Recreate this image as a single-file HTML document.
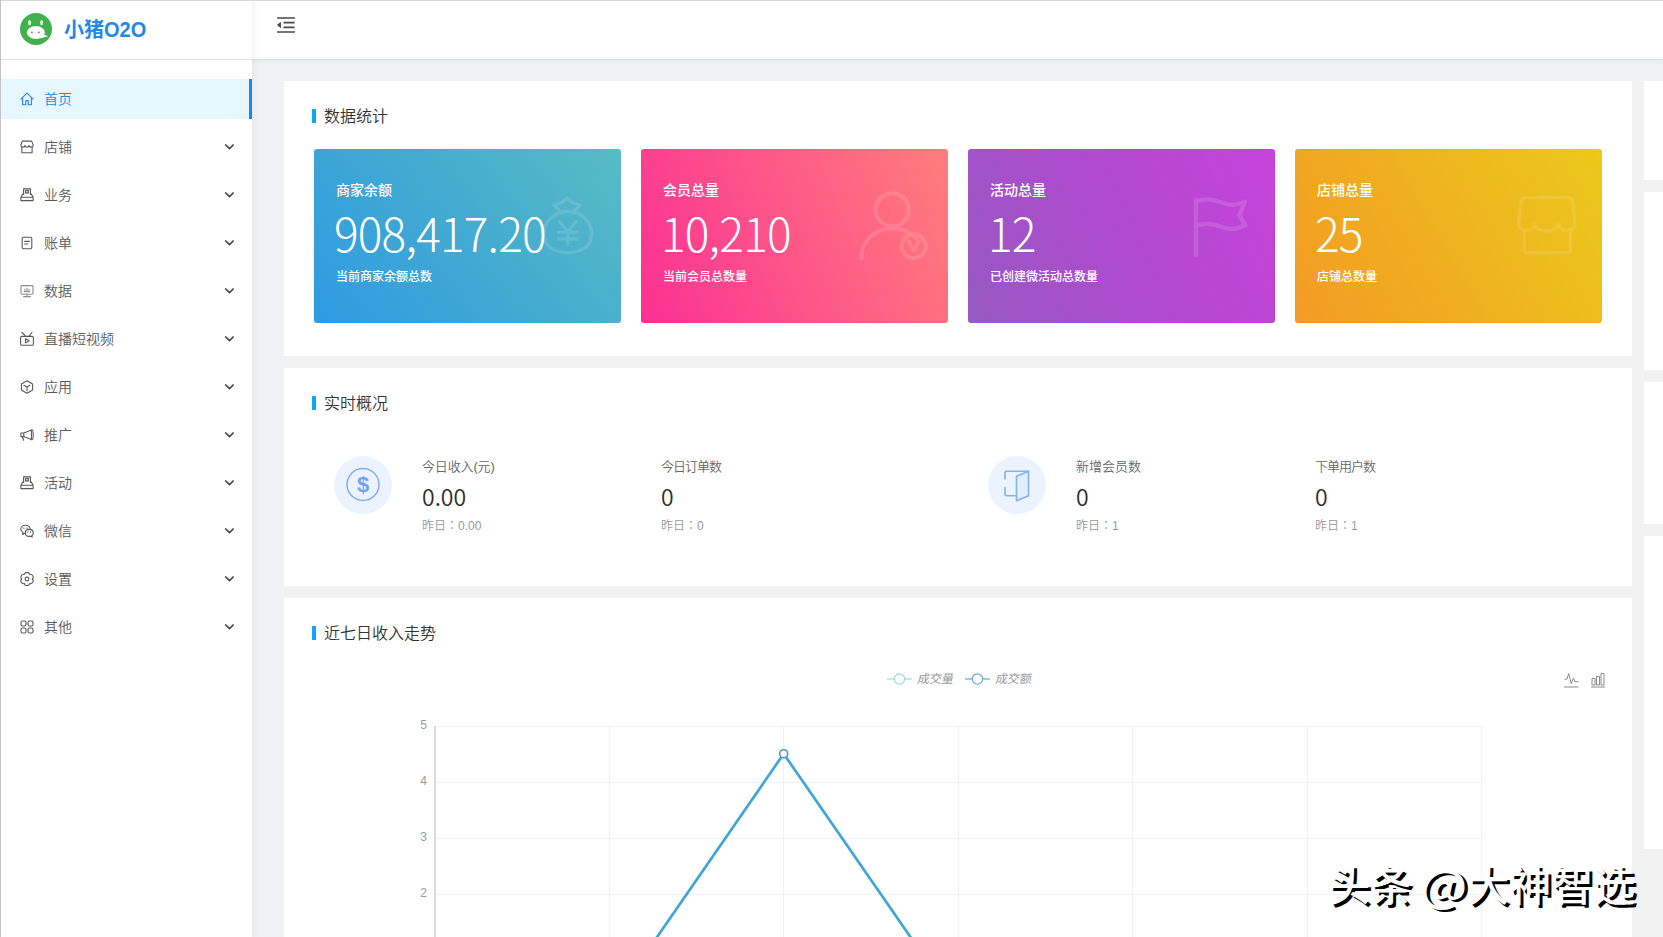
<!DOCTYPE html>
<html lang="zh-CN">
<head>
<meta charset="utf-8">
<title>小猪O2O</title>
<style>
*{box-sizing:border-box;margin:0;padding:0}
html,body{width:1663px;height:937px;overflow:hidden}
body{position:relative;background:#f0f2f5;font-family:"Liberation Sans","Noto Sans CJK SC DemiLight","Noto Sans CJK SC",sans-serif;font-size:14px;color:#595959}
.abs{position:absolute}
/* frame lines from screenshot */
#topline{position:absolute;left:0;top:0;width:1663px;height:1px;background:#d8d8d8;z-index:50}
#leftline{position:absolute;left:0;top:0;width:1px;height:937px;background:#c4c4c4;z-index:50}
/* sidebar */
#side{position:absolute;left:0;top:0;width:252px;height:937px;background:#fff;box-shadow:2px 0 6px rgba(0,21,41,.06);z-index:10}
#logo{position:absolute;left:0;top:0;width:252px;height:60px;border-bottom:1px solid #e4e4e4}
#logo .pig{position:absolute;left:20px;top:13px;width:32px;height:32px}
#logo .name{position:absolute;left:64px;top:15px;font-size:20px;line-height:30px;font-weight:bold;color:#2188e6;white-space:nowrap;letter-spacing:0;font-family:"Liberation Sans","Noto Sans CJK SC",sans-serif}
.mi{position:absolute;left:0;width:252px;height:40px;line-height:40px;font-size:14px;color:#595959}
.mi svg.ic{position:absolute;left:20px;top:13px;width:14px;height:14px}
.mi .t{position:absolute;left:44px;top:0;white-space:nowrap}
.mi svg.ch{position:absolute;left:223.5px;top:13.6px;width:11px;height:11px}
.mi.on{background:#e6f7ff;color:#1e88e5}
.mi.on:after{content:"";position:absolute;right:0;top:0;width:3px;height:40px;background:#1e88e5}
/* header */
#head{position:absolute;left:252px;top:0;width:1411px;height:60px;background:#fff;border-bottom:1px solid #e2e2e2;box-shadow:0 1px 4px rgba(0,21,41,.06);z-index:5}
#head svg{position:absolute;left:24px;top:15px;width:20px;height:20px}
/* panels */
.panel{position:absolute;background:#fff}
#wrap{position:absolute;left:284px;top:81px;width:1379px;height:856px;background:#f2f2f2}
.ttl{position:absolute;left:28px;top:28px;height:14px;border-left:4px solid #0aa7fa;padding-left:8px;font-size:16px;line-height:16px;color:#333;white-space:nowrap}
.sc{position:absolute;top:68px;width:307px;height:174px;border-radius:3px;color:#fff;overflow:hidden;font-family:"Liberation Sans","Noto Sans CJK SC",sans-serif}
.sc .l{position:absolute;left:22px;top:31px;font-size:14px;line-height:20px;white-space:nowrap;font-weight:500}
.sc .n{position:absolute;left:20px;top:53px;font-family:"Noto Sans CJK SC","Liberation Sans",sans-serif;font-weight:300;font-size:46px;line-height:60px;white-space:nowrap;letter-spacing:-0.8px}
.sc .s{position:absolute;left:22px;top:119px;font-size:12px;line-height:18px;white-space:nowrap;font-weight:500}
.sc svg{position:absolute}

.ov{position:absolute;top:0;left:0}
.ov .c{position:absolute;top:88px;width:58px;height:58px;border-radius:50%;background:#ecf3fe}
.ov .c svg{position:absolute;left:0;top:0;width:58px;height:58px}
.ov .k{position:absolute;top:89px;font-size:13px;line-height:20px;color:#666;white-space:nowrap}
.ov .v{position:absolute;top:111px;font-size:23px;line-height:34px;color:#2c2c2c;white-space:nowrap;font-family:"Noto Sans CJK SC DemiLight","Noto Sans CJK SC","Liberation Sans",sans-serif}
.ov .y{position:absolute;top:148px;font-size:12px;line-height:18px;color:#999;white-space:nowrap}
#wm{position:absolute;left:1328px;top:855px;font-size:42px;line-height:56px;color:#fff;text-shadow:3px 2.5px 0 #000;white-space:nowrap;z-index:60;font-weight:500;font-family:"Noto Sans CJK SC","Liberation Sans",sans-serif}
.cj{font-family:"Noto Sans CJK TC","Noto Sans CJK JP",sans-serif}
</style>
</head>
<body>
<div id="topline"></div><div id="leftline"></div>
<div id="side">
 <div id="logo">
  <svg class="pig" viewBox="0 0 32 32"><circle cx="16" cy="16" r="16" fill="#3fb24e"/><ellipse cx="9.600" cy="9.600" rx="1.550" ry="2.700" fill="#e2fbdc"/><ellipse cx="21.600" cy="9.600" rx="1.550" ry="2.700" fill="#e2fbdc"/><ellipse cx="15.850" cy="19.500" rx="9" ry="6.400" fill="#fff"/><path d="M20 25.400C23.500 24.600 25.500 23.700 28.300 23.200L23.500 21.500z" fill="#fff"/><circle cx="11.900" cy="19.400" r=".85" fill="#8a6a8e"/><circle cx="18.900" cy="19.400" r=".85" fill="#8a6a8e"/></svg>
  <div class="name">小猪<span style="display:inline-block;transform:scaleY(1.1);transform-origin:50% 76%">O2O</span></div>
 </div>
 <div id="menu">
 <div class="mi on" style="top:79px"><svg class="ic" viewBox="0 0 14 14" fill="none" stroke="currentColor" stroke-width="1.1" stroke-linejoin="round" stroke-linecap="round"><path d="M.9 7.2L7 1.2l6.1 6M2.6 6.2v6.6h3.2V8.6h2.4v4.2h3.2V6.2"/></svg><span class="t">首页</span></div>
 <div class="mi" style="top:127px"><svg class="ic" viewBox="0 0 14 14" fill="none" stroke="currentColor" stroke-width="1.1" stroke-linejoin="round" stroke-linecap="round"><path d="M.9 4.9L2.3 1.1h9.4l1.4 3.8v.5a2.03 1.7 0 0 1-4.07 0a2.03 1.7 0 0 1-4.06 0a2.03 1.7 0 0 1-4.07 0z"/><path d="M1.9 7.4v5.4h10.2V7.4"/></svg><span class="t">店铺</span><svg class="ch" viewBox="0 0 10 10" fill="none" stroke="#434343" stroke-width="1.500"><path d="M1.200 3.200L5 7l3.800-3.800"/></svg></div>
 <div class="mi" style="top:175px"><svg class="ic" viewBox="0 0 14 14" fill="none" stroke="currentColor" stroke-width="1.1" stroke-linejoin="round" stroke-linecap="round"><path d="M3.6 6.4V.9h6.8v5.5M5.6 2.6h2.8v2.3H5.6zM3.6 6.1H2.7L.9 9.3v3.3h12.2V9.3L11.3 6.1h-.9M.9 9.3h12.2"/></svg><span class="t">业务</span><svg class="ch" viewBox="0 0 10 10" fill="none" stroke="#434343" stroke-width="1.500"><path d="M1.200 3.200L5 7l3.800-3.800"/></svg></div>
 <div class="mi" style="top:223px"><svg class="ic" viewBox="0 0 14 14" fill="none" stroke="currentColor" stroke-width="1.1" stroke-linejoin="round" stroke-linecap="round"><rect x="2.2" y="1.2" width="9.6" height="11.6" rx="1.2"/><path d="M4.6 5.4h4.8M4.6 8h3.2"/></svg><span class="t">账单</span><svg class="ch" viewBox="0 0 10 10" fill="none" stroke="#434343" stroke-width="1.500"><path d="M1.200 3.200L5 7l3.800-3.800"/></svg></div>
 <div class="mi" style="top:271px"><svg class="ic" viewBox="0 0 14 14" fill="none" stroke="currentColor" stroke-width="1.1" stroke-linejoin="round" stroke-linecap="round" style="color:#8c8c8c"><rect x="1" y="1.6" width="12" height="8.6" rx=".9"/><path d="M3.6 12.6h6.8M7 10.2v2.4M5 5v2.6M7 4v3.6M9 5.4v2.2M4.2 7.8h5.6"/></svg><span class="t">数据</span><svg class="ch" viewBox="0 0 10 10" fill="none" stroke="#434343" stroke-width="1.500"><path d="M1.200 3.200L5 7l3.800-3.800"/></svg></div>
 <div class="mi" style="top:319px"><svg class="ic" viewBox="0 0 14 14" fill="none" stroke="currentColor" stroke-width="1.1" stroke-linejoin="round" stroke-linecap="round"><rect x=".6" y="4.4" width="12.8" height="8.9" rx="1.3"/><path d="M2 .5l3.900 3.900M12 .5l-3.200 3.900M5.600 6.700l3.500 2.100-3.500 2.100z"/></svg><span class="t">直播短视频</span><svg class="ch" viewBox="0 0 10 10" fill="none" stroke="#434343" stroke-width="1.500"><path d="M1.200 3.200L5 7l3.800-3.800"/></svg></div>
 <div class="mi" style="top:367px"><svg class="ic" viewBox="0 0 14 14" fill="none" stroke="currentColor" stroke-width="1.1" stroke-linejoin="round" stroke-linecap="round"><path d="M7 .8l5.6 3.2v6L7 13.2 1.4 10V4zM4 5.3L7 7l3-1.7M7 7v3.6"/></svg><span class="t">应用</span><svg class="ch" viewBox="0 0 10 10" fill="none" stroke="#434343" stroke-width="1.500"><path d="M1.200 3.200L5 7l3.800-3.800"/></svg></div>
 <div class="mi" style="top:415px"><svg class="ic" viewBox="0 0 14 14" fill="none" stroke="currentColor" stroke-width="1.1" stroke-linejoin="round" stroke-linecap="round"><path d="M.9 5h2.9v3.6H.9zM3.8 5L12 1.8c.8 0 1.2 2.4 1.2 5s-.4 5-1.200 5L3.800 8.600M11.400 2.200v9.600M2.400 8.800l1.200 3.400"/></svg><span class="t">推广</span><svg class="ch" viewBox="0 0 10 10" fill="none" stroke="#434343" stroke-width="1.500"><path d="M1.200 3.200L5 7l3.800-3.800"/></svg></div>
 <div class="mi" style="top:463px"><svg class="ic" viewBox="0 0 14 14" fill="none" stroke="currentColor" stroke-width="1.1" stroke-linejoin="round" stroke-linecap="round"><path d="M3.6 6.4V.9h6.8v5.5M5.6 2.6h2.8v2.3H5.6zM3.6 6.1H2.7L.9 9.3v3.3h12.2V9.3L11.3 6.1h-.9M.9 9.3h12.2"/></svg><span class="t">活动</span><svg class="ch" viewBox="0 0 10 10" fill="none" stroke="#434343" stroke-width="1.500"><path d="M1.200 3.200L5 7l3.800-3.800"/></svg></div>
 <div class="mi" style="top:511px"><svg class="ic" viewBox="0 0 14 14" fill="none" stroke="currentColor" stroke-width="1.1" stroke-linejoin="round" stroke-linecap="round"><path d="M5.700 9.300c-.300 0-.700 0-1-.100L2.600 10.400l.500-1.700C1.700 7.900.8 6.700.8 5.300.8 3 2.900 1.200 5.500 1.200c2.300 0 4.200 1.400 4.600 3.300"/><path d="M13.300 8.900c0-2-1.800-3.500-4-3.500s-4 1.500-4 3.500 1.800 3.500 4 3.500c.400 0 .900-.100 1.300-.200l1.600.9-.400-1.400c.900-.700 1.500-1.700 1.500-2.800z"/><path d="M3.900 4.100v.1M7 4.100v.1M8 8v.1M10.600 8v.1" stroke-width="1.300"/></svg><span class="t">微信</span><svg class="ch" viewBox="0 0 10 10" fill="none" stroke="#434343" stroke-width="1.500"><path d="M1.200 3.200L5 7l3.800-3.800"/></svg></div>
 <div class="mi" style="top:559px"><svg class="ic" viewBox="0 0 14 14" fill="none" stroke="currentColor" stroke-width="1.1" stroke-linejoin="round" stroke-linecap="round"><path d="M4.35 2.41A2.75 2.75 0 0 1 9.65 2.41A2.75 2.75 0 0 1 12.30 7.00A2.75 2.75 0 0 1 9.65 11.59A2.75 2.75 0 0 1 4.35 11.59A2.75 2.75 0 0 1 1.70 7.00A2.75 2.75 0 0 1 4.35 2.41Z"/><circle cx="7" cy="7" r="1.9"/></svg><span class="t">设置</span><svg class="ch" viewBox="0 0 10 10" fill="none" stroke="#434343" stroke-width="1.500"><path d="M1.200 3.200L5 7l3.800-3.800"/></svg></div>
 <div class="mi" style="top:607px"><svg class="ic" viewBox="0 0 14 14" fill="none" stroke="currentColor" stroke-width="1.1" stroke-linejoin="round" stroke-linecap="round"><rect x="1" y="1" width="5" height="5" rx="1.500"/><rect x="8" y="1" width="5" height="5" rx="1.500"/><rect x="1" y="8" width="5" height="5" rx="1.500"/><rect x="8" y="8" width="5" height="5" rx="1.500"/></svg><span class="t">其他</span><svg class="ch" viewBox="0 0 10 10" fill="none" stroke="#434343" stroke-width="1.500"><path d="M1.200 3.200L5 7l3.800-3.800"/></svg></div>
 </div>
</div>
<div id="head">
 <svg viewBox="64 64 896 896" fill="#4a4a4a"><path d="M408 442h480c4.400 0 8-3.600 8-8v-56c0-4.400-3.600-8-8-8H408c-4.400 0-8 3.600-8 8v56c0 4.400 3.600 8 8 8zm-8 204c0 4.400 3.600 8 8 8h480c4.400 0 8-3.600 8-8v-56c0-4.400-3.600-8-8-8H408c-4.400 0-8 3.600-8 8v56zm504-486H120c-4.400 0-8 3.600-8 8v56c0 4.400 3.600 8 8 8h784c4.400 0 8-3.600 8-8v-56c0-4.400-3.600-8-8-8zm0 632H120c-4.400 0-8 3.600-8 8v56c0 4.400 3.600 8 8 8h784c4.400 0 8-3.600 8-8v-56c0-4.400-3.600-8-8-8zM115.400 518.900L271.700 642c5.800 4.600 14.400.5 14.400-6.900V388.900c0-7.400-8.500-11.500-14.400-6.900L115.400 505.100a8.740 8.740 0 0 0 0 13.800z"/></svg>
</div>
<div id="wrap">
 <!-- left column panels -->
 <div class="panel" id="p1" style="left:0;top:0;width:1348px;height:275px">
  <div class="ttl">数据统计</div>
  <div class="sc" style="left:30px;background:linear-gradient(50deg,#2d9be3 0%,#43aad1 50%,#58bcc3 100%)"><div class="l">商家余额</div><div class="n">908,417.20</div><div class="s">当前商家余额总数</div><svg style="left:0;top:0" width="307" height="174" viewBox="0 0 307 174" fill="none" stroke="#fff" stroke-linecap="round" stroke-linejoin="round" stroke-width="3.300" opacity=".12"><path d="M246.500 62.500L240 56l8-2.500 5-4.500 5 4.500 8 2.500-6.500 6.500"/><path d="M253.800 62.500c-14 0-23.800 10-23.800 22.500 0 11 8 18.500 23.800 18.500s23.800-7.500 23.800-18.500c0-12.500-9.800-22.500-23.800-22.500z"/><path d="M245.500 72.500l8.300 10.500 8.300-10.500M244.500 83.500h18.600M244.500 90h18.600M253.800 83.500v12"/></svg></div>
  <div class="sc" style="left:357px;background:linear-gradient(68deg,#fb3094 0%,#fd5888 50%,#ff7d7b 100%)"><div class="l">会员总量</div><div class="n">10,210</div><div class="s">当前会员总数量</div><svg style="left:0;top:0" width="307" height="174" viewBox="0 0 307 174" fill="none" stroke="#fff" stroke-linecap="round" stroke-linejoin="round" stroke-width="4" opacity=".125" transform="translate(0,1)"><circle cx="251.200" cy="59.700" r="16.500"/><path d="M220.500 108c0-17 13-29.500 30.500-29.500 10.500 0 19 4 24.500 10"/><circle cx="272.700" cy="96.100" r="12"/><path d="M267.700 91.500l5 9 5-9"/></svg></div>
  <div class="sc" style="left:684px;background:linear-gradient(66deg,#9759c2 0%,#b04acf 50%,#c743da 100%)"><div class="l">活动总量</div><div class="n">12</div><div class="s">已创建微活动总数量</div><svg style="left:0;top:0" width="307" height="174" viewBox="0 0 307 174" fill="none" stroke="#fff" stroke-linecap="round" stroke-linejoin="round" stroke-width="4.400" opacity=".125"><path d="M228 51v55"/><path d="M228 52.500c9-3.500 17-2.500 25 .800s16 3.200 24 -.600l-5.700 13.500 6 10c-8 4.500-16 4.800-24 1.500s-16-4.200-25.300-.700"/></svg></div>
  <div class="sc" style="left:1011px;background:linear-gradient(60deg,#f39b24 0%,#efb220 50%,#ebc91c 100%)"><div class="l">店铺总量</div><div class="n">25</div><div class="s">店铺总数量</div><svg style="left:0;top:0" width="307" height="174" viewBox="0 0 307 174" fill="none" stroke="#fff" stroke-linecap="round" stroke-linejoin="round" stroke-width="3.400" opacity=".11"><path d="M231.500 48.600h41.500c3 0 4.500 2 5 5l2 22.500c-1.500 3.500-4.500 5.500-8.200 5.500s-6.600-2.200-8.100-6c-2 4-6.500 6.600-12.200 6.600s-10-2.600-11.900-6.600c-1.500 3.800-4.500 6-8.100 6s-6.500-2-8-5.500l2-22.500c.500-3 2-5 6-5z"/><path d="M229.200 82v18.800a3 3 0 0 0 3 3h40.200a3 3 0 0 0 3-3V82"/></svg></div>
 </div>
 <div class="panel" id="p2" style="left:0;top:287px;width:1348px;height:218px">
  <div class="ttl">实时概况</div>
  <div class="ov">
   <div class="c" style="left:50px"><svg viewBox="0 0 58 58"><circle cx="29" cy="28.500" r="16" fill="none" stroke="#7eaef6" stroke-width="1.500"/><text x="29" y="36.200" text-anchor="middle" font-family="Liberation Sans, sans-serif" font-weight="bold" font-size="22" fill="#6fa4f5">$</text></svg></div>
   <div class="k" style="left:138px;letter-spacing:-.15px">今日收入(元)</div><div class="v" style="left:138px">0.00</div><div class="y" style="left:138px">昨日<span class="cj" lang="zh-TW">：</span>0.00</div>
   <div class="k" style="left:377px;letter-spacing:-1px">今日订单数</div><div class="v" style="left:377px">0</div><div class="y" style="left:377px">昨日<span class="cj" lang="zh-TW">：</span>0</div>
   <div class="c" style="left:704px"><svg viewBox="0 0 58 58" fill="none" stroke="#7eb3f6" stroke-width="1.600" stroke-linejoin="round" stroke-linecap="round"><path d="M40.500 15.300H18.500a1.500 1.500 0 0 0-1.500 1.500V23M17 31.500v6.700a1.500 1.500 0 0 0 1.500 1.500H28.500"/><path d="M40.500 15.300L28.500 20.300V44.800L40.500 39.800z" fill="#e3eefd"/></svg></div>
   <div class="k" style="left:792px">新增会员数</div><div class="v" style="left:792px">0</div><div class="y" style="left:792px">昨日<span class="cj" lang="zh-TW">：</span>1</div>
   <div class="k" style="left:1031px;letter-spacing:-1px">下单用户数</div><div class="v" style="left:1031px">0</div><div class="y" style="left:1031px">昨日<span class="cj" lang="zh-TW">：</span>1</div>
  </div>
 </div>
 <div class="panel" id="p3" style="left:0;top:517px;width:1348px;height:360px">
  <div class="ttl">近七日收入走势</div>
  <svg class="abs" style="left:0;top:0" width="1348" height="339" viewBox="0 0 1348 339" font-family="Liberation Sans, Noto Sans CJK SC, sans-serif">
  <path d="M151 128.5H1198" stroke="#f0f0f0" stroke-width="1"/>
  <path d="M151 184.5H1198" stroke="#f0f0f0" stroke-width="1"/>
  <path d="M151 240.5H1198" stroke="#f0f0f0" stroke-width="1"/>
  <path d="M151 296.5H1198" stroke="#f0f0f0" stroke-width="1"/>
  <path d="M325.5 128V339" stroke="#f0f0f0" stroke-width="1"/>
  <path d="M499.5 128V339" stroke="#f0f0f0" stroke-width="1"/>
  <path d="M674.5 128V339" stroke="#f0f0f0" stroke-width="1"/>
  <path d="M848.5 128V339" stroke="#f0f0f0" stroke-width="1"/>
  <path d="M1023.5 128V339" stroke="#f0f0f0" stroke-width="1"/>
  <path d="M1197.5 128V339" stroke="#f0f0f0" stroke-width="1"/>
  <path d="M151.0 128V339" stroke="#c4c4c4" stroke-width="1.200"/>
  <text x="143" y="131.4" text-anchor="end" font-size="12" fill="#999999">5</text>
  <text x="143" y="187.4" text-anchor="end" font-size="12" fill="#999999">4</text>
  <text x="143" y="243.4" text-anchor="end" font-size="12" fill="#999999">3</text>
  <text x="143" y="299.4" text-anchor="end" font-size="12" fill="#999999">2</text>
  <path d="M325.4 408L499.7 155.800L674.200 408" fill="none" stroke="#3fa5d8" stroke-width="2.700" stroke-linejoin="round"/>
  <circle cx="499.700" cy="155.700" r="4" fill="#fff" stroke="#4596cf" stroke-width="1.600"/>
  <path d="M603 81h25" stroke="#93dcc9" stroke-width="1.150"/><circle cx="615.5" cy="81" r="5.200" fill="#fff" stroke="#93dcc9" stroke-width="1.150"/>
  <text transform="translate(633,85) skewX(-11)" font-size="12" fill="#999999">成交量</text>
  <path d="M681 81h25" stroke="#5fa8d6" stroke-width="1.150"/><circle cx="693.5" cy="81" r="5.200" fill="#fff" stroke="#5fa8d6" stroke-width="1.150"/>
  <text transform="translate(711,85) skewX(-11)" font-size="12" fill="#999999">成交额</text>
  <path d="M1280.5 81.5l2.500-.500 1.700-5.500 2.500 10 2.300-5.300 1.500 3.300 3.500.200M1280.0 89.0h14.500" fill="none" stroke="#8c8c8c" stroke-width="1"/>
  <path d="M1308.0 80.5h3v6.500h-3zM1312.5 78.5h3v8.500h-3zM1317.0 75.5h3v11.500h-3zM1307.0 89.0h14" fill="none" stroke="#8c8c8c" stroke-width="1"/>
  </svg>
 </div>
 <!-- right column panels -->
 <div class="panel" style="left:1360px;top:0;width:19px;height:99px"></div>
 <div class="panel" style="left:1360px;top:111px;width:19px;height:178px"></div>
 <div class="panel" style="left:1360px;top:301px;width:19px;height:142px"></div>
 <div class="panel" style="left:1360px;top:455px;width:19px;height:313px"></div>
</div>
<div id="wm">头条 <span style="display:inline-block;transform:scale(1.16,1.04);margin:0 3px 0 2px">@</span>大神智选</div>
</body>
</html>
